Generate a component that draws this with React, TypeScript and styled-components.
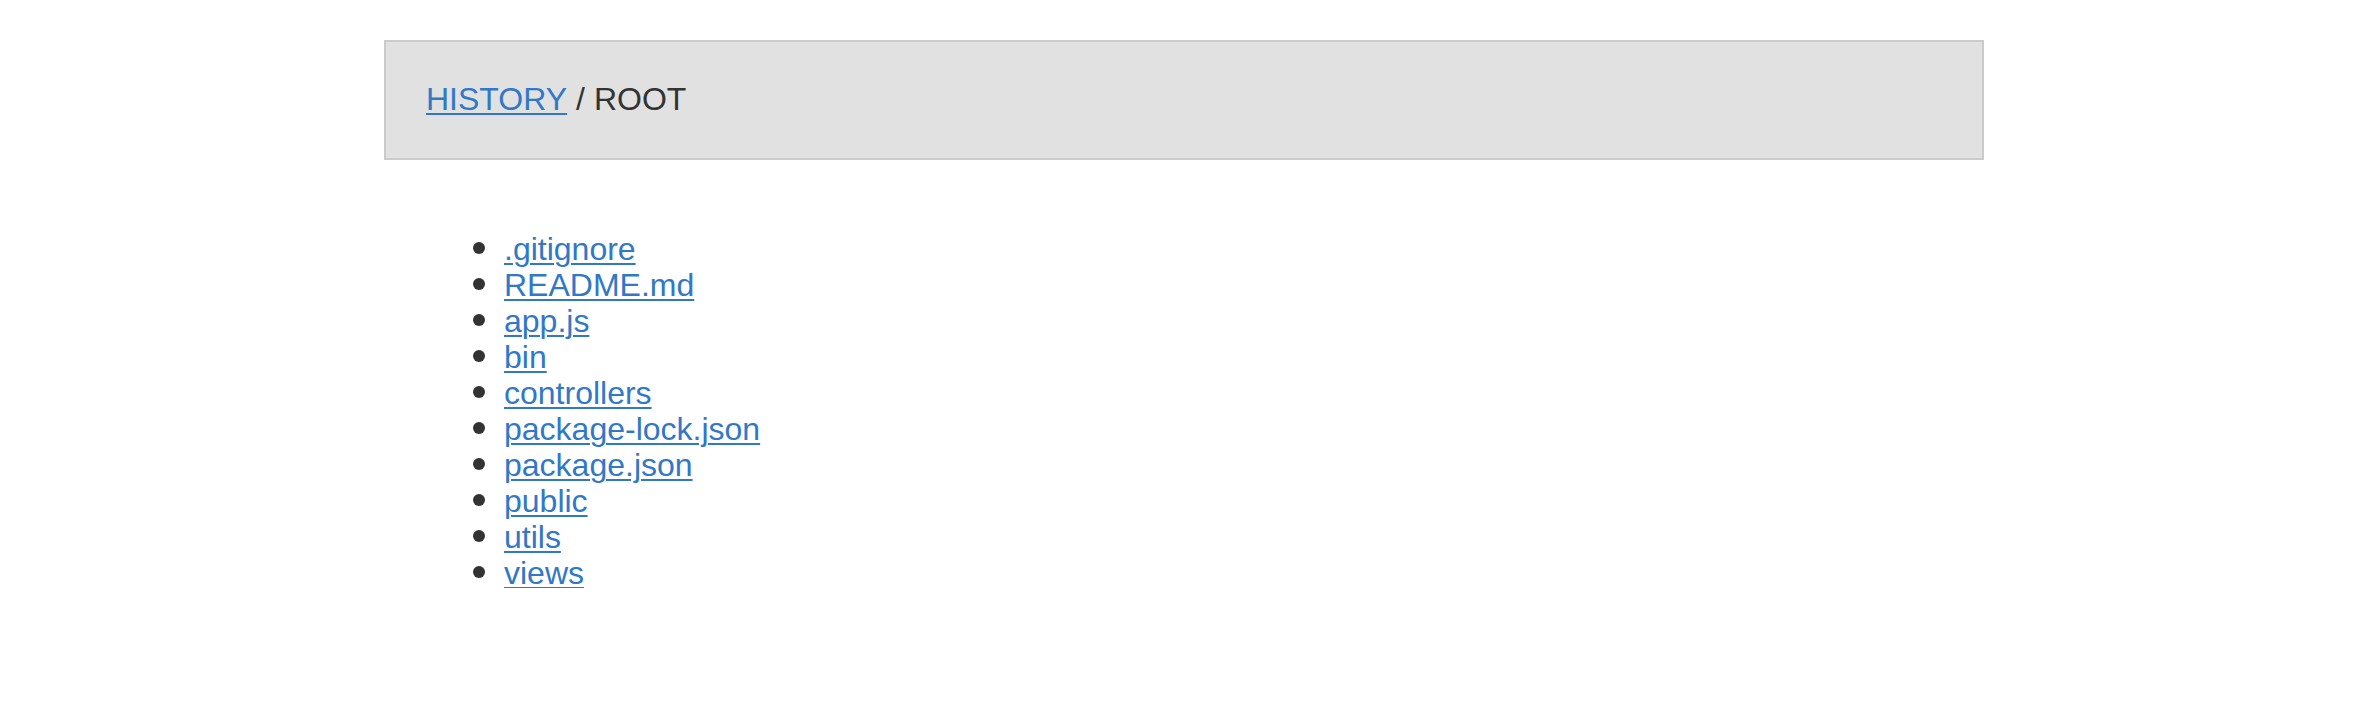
import React from 'react';
import styled, { createGlobalStyle } from 'styled-components';

const files = [
  '.gitignore',
  'README.md',
  'app.js',
  'bin',
  'controllers',
  'package-lock.json',
  'package.json',
  'public',
  'utils',
  'views',
];

const App = () => {
  return (
    <>
      <GlobalStyle />
      <Container>
        <Breadcrumb>
          <Link href='#'>HISTORY</Link>
          <Separator>/</Separator>
          <Current>ROOT</Current>
        </Breadcrumb>
        <Content>
          <FileList>
            {files.map((name) => (
              <FileItem key={name}>
                <Link href='#'>{name}</Link>
              </FileItem>
            ))}
          </FileList>
        </Content>
      </Container>
    </>
  );
};

export default App;

const GlobalStyle = createGlobalStyle`
  body {
    margin: 0;
    background: #fff;
    color: #333;
    font-family: "Liberation Sans", Arial, sans-serif;
    font-size: 32px;
    line-height: 36px;
  }
`;

const Container = styled.div`
  width: 1600px;
  margin: 40px auto 0;
`;

const Breadcrumb = styled.div`
  box-sizing: border-box;
  display: flex;
  align-items: center;
  height: 120px;
  padding: 0 40px 2px;
  background-color: #e1e1e1;
  border: 2px solid #cbcbcb;
  line-height: normal;
`;

const Link = styled.a`
  color: #3178c6;
  text-decoration: underline;
  text-decoration-thickness: 2px;
  text-underline-offset: 3px;
`;

const Separator = styled.span`
  margin: 0 9px;
`;

const Current = styled.span`
  color: #333;
`;

const Content = styled.div`
  padding: 68px 40px 0;
`;

const FileList = styled.ul`
  margin: 0;
  padding-left: 80px;
`;

const FileItem = styled.li`
  height: 36px;

  &::marker {
    font-size: 40px;
  }
`;
